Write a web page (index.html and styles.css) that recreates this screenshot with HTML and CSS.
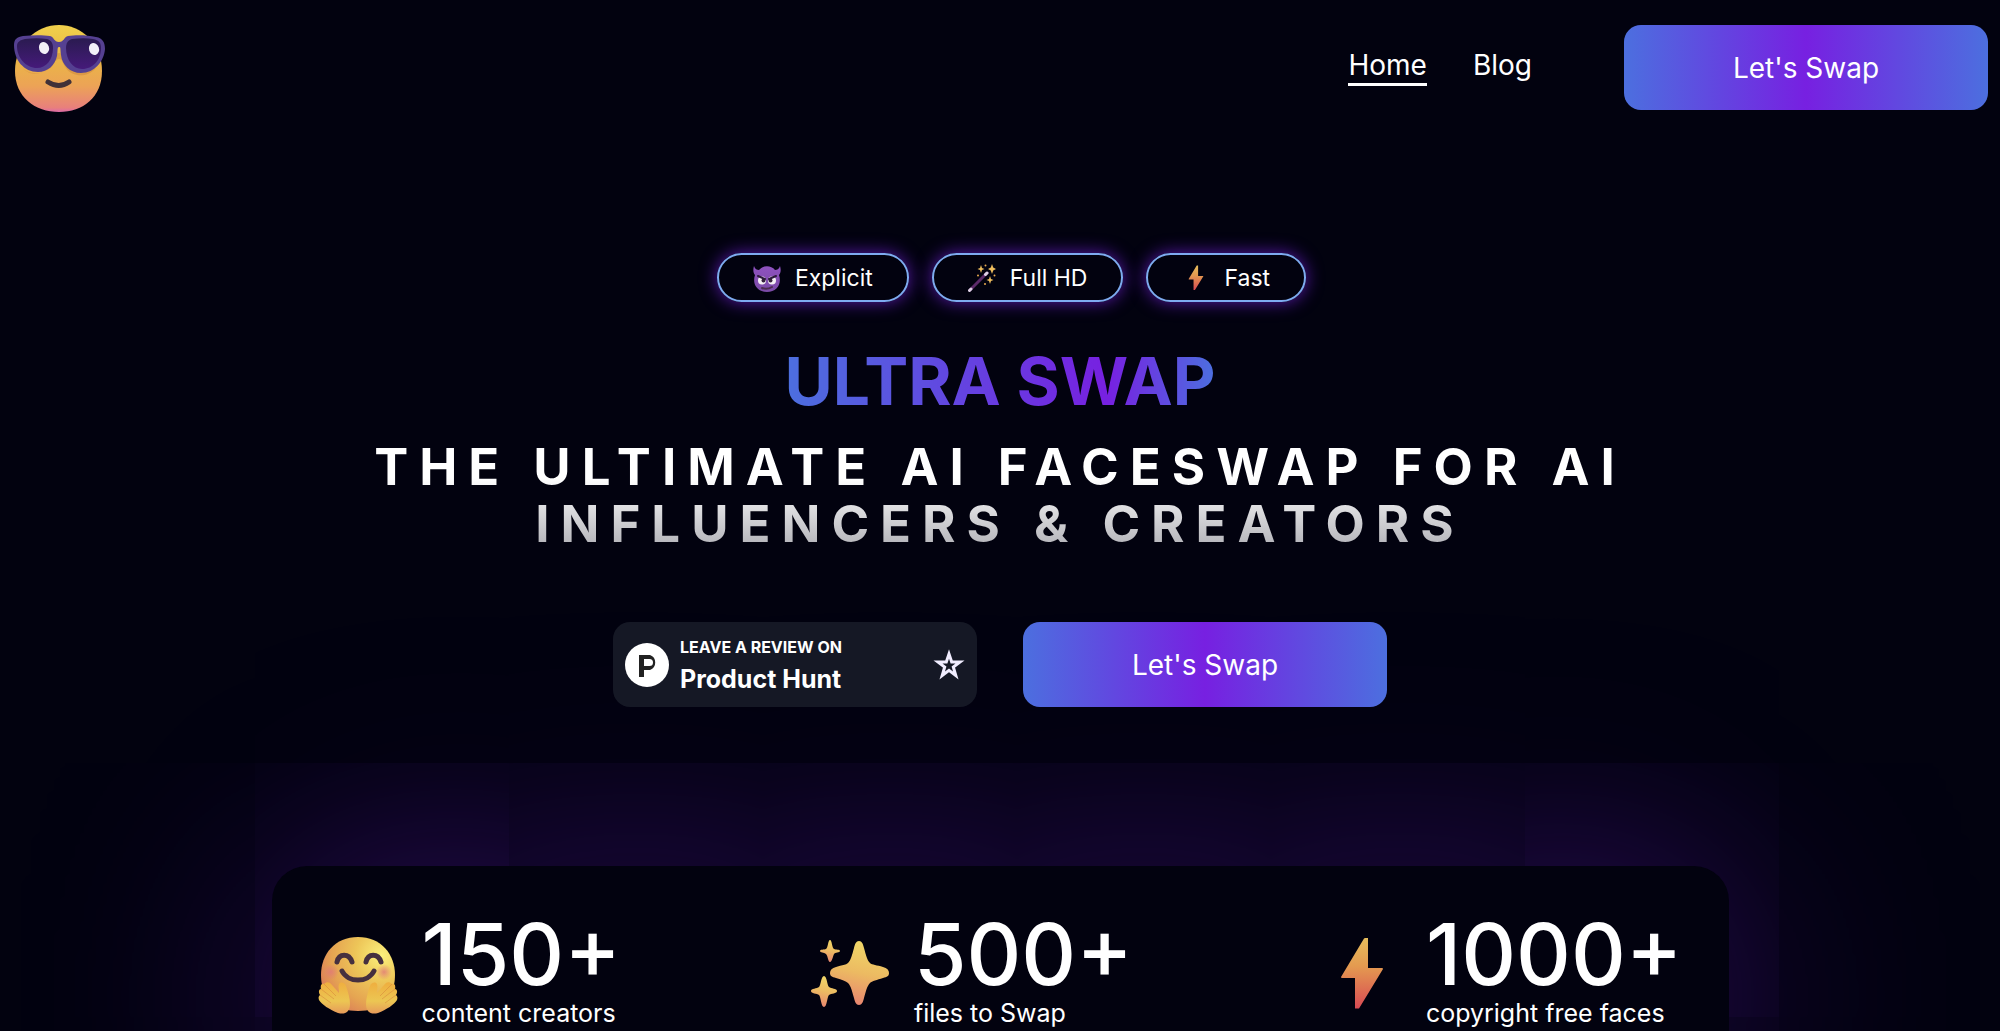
FILE: index.html
```html
<!DOCTYPE html>
<html lang="en">
<head>
<meta charset="utf-8">
<meta name="viewport" content="width=device-width, initial-scale=1">
<title>Ultra Swap</title>
<link rel="stylesheet" href="styles.css">
</head>
<body>
<svg class="defs" width="0" height="0" aria-hidden="true">
  <defs>
    <linearGradient id="face" x1="0" y1="0" x2="0" y2="1">
      <stop offset="0" stop-color="#f0d04c"/><stop offset=".35" stop-color="#eab944"/><stop offset=".7" stop-color="#eca356"/><stop offset=".95" stop-color="#e8807c"/><stop offset="1" stop-color="#dd6aa8"/>
    </linearGradient>
    <radialGradient id="hug" cx=".82" cy=".25" r=".9">
      <stop offset="0" stop-color="#fbf07c"/><stop offset=".4" stop-color="#edc558"/><stop offset=".75" stop-color="#e5a452"/><stop offset="1" stop-color="#dc7f58"/>
    </radialGradient>
    <radialGradient id="blush"><stop offset="0" stop-color="#e07878" stop-opacity=".8"/><stop offset="1" stop-color="#e07878" stop-opacity="0"/></radialGradient>
    <linearGradient id="hand" x1="0" y1="0" x2="0" y2="1"><stop offset="0" stop-color="#efae3f"/><stop offset=".6" stop-color="#ecc653"/><stop offset="1" stop-color="#e69a5a"/></linearGradient>
    <linearGradient id="lens" x1="0" y1="0" x2="0" y2="1"><stop offset="0" stop-color="#2a1b50"/><stop offset="1" stop-color="#451a7a"/></linearGradient>
    <linearGradient id="spark" x1=".6" y1="0" x2=".4" y2="1"><stop offset="0" stop-color="#f0d868"/><stop offset=".5" stop-color="#ecba62"/><stop offset="1" stop-color="#e88470"/></linearGradient>
    <linearGradient id="bolt" x1="0" y1="0" x2="0" y2="1"><stop offset="0" stop-color="#e6bd5c"/><stop offset=".4" stop-color="#e49a50"/><stop offset="1" stop-color="#d84a54"/></linearGradient>
    <linearGradient id="devil" x1="0" y1="0" x2="0" y2="1"><stop offset="0" stop-color="#8f52c0"/><stop offset="1" stop-color="#7a4aa6"/></linearGradient>
    <symbol id="i-bolt" viewBox="0 0 80 80"><path d="M43 4h3v30h14.500l.5 1-24 39.500h-4V44H19.500l-.5-1L42 4.500z" fill="url(#bolt)"/></symbol>
  </defs>
</svg>

<header class="header">
  <a class="logo" href="#" aria-label="Ultra Swap">
    <svg width="94" height="94" viewBox="0 0 94 94" aria-hidden="true">
      <path d="M47 4C69 4 90 22 90 50 90 76 71 91 47 91S3 76 3 50C3 22 25 4 47 4z" fill="url(#face)"/>
      <path d="M9 45c8 12 24 9 31-2 4-6 3-11 7-11s4 7 9 13c8 9 22 9 29-2l-2 5c-8 9-23 8-29-1-4-5-3-9-7-9s-5 7-10 10c-8 6-22 6-28-3z" fill="#c8803c" opacity=".45"/>
      <path d="M2 24c0-6 3-8 9-9 10-1 20-1 27 0 4 1 4 6 9 6s5-5 9-6c8-1 19-1 28 1 7 1 9 6 9 12-1 12-10 24-24 24-11 0-19-8-20-18-1-7 0-8-2-8s-1 3-2 9c-2 9-9 16-19 16C12 51 2 39 2 24z" fill="#554091"/>
      <path d="M5 25c0-4 3-6 8-7 8-1 15-1 22 0 4 1 6 4 6 9 0 12-7 20-16 20C14 47 5 37 5 25z" fill="url(#lens)"/>
      <path d="M54 27c0-5 2-8 6-9 8-1 15-1 21 0 6 1 8 4 8 9 0 12-8 21-19 21-9 0-16-9-16-21z" fill="url(#lens)"/>
      <ellipse cx="32" cy="27" rx="5" ry="6" fill="#f2f0f8" transform="rotate(-20 32 27)"/>
      <ellipse cx="82" cy="28" rx="5" ry="6" fill="#f2f0f8" transform="rotate(-20 82 28)"/>
      <path d="M36 61q11 7 21 0" fill="none" stroke="#413138" stroke-width="5" stroke-linecap="round"/>
    </svg>
  </a>
  <nav class="nav" aria-label="Main">
    <a class="nav-link nav-link-active" href="#" aria-current="page">Home</a>
    <a class="nav-link" href="#blog">Blog</a>
  </nav>
  <button class="button" type="button">Let's Swap</button>
</header>

<main>
  <section class="hero">
    <ul class="tags">
      <li class="tag">
        <svg class="tag-icon" viewBox="0 0 28 28" aria-hidden="true">
          <path d="M1 2c1 3 3 4 5 4 4-5 12-5 16 0 2 0 4-1 5-4 1 3 1 7-1 9 3 9-2 17-12 17S-1 20 2 11C0 9 0 5 1 2z" fill="url(#devil)"/>
          <circle cx="9" cy="16.500" r="4" fill="#f4f0f4"/><circle cx="19" cy="16.500" r="4" fill="#f4f0f4"/>
          <circle cx="10.500" cy="16.500" r="2" fill="#35203c"/><circle cx="17.500" cy="16.500" r="2" fill="#35203c"/>
          <path d="M5 12l7 3M23 12l-7 3" stroke="#2c1a3c" stroke-width="2" stroke-linecap="round"/>
          <path d="M9 24q5 2 10-1" fill="none" stroke="#4c2c50" stroke-width="2" stroke-linecap="round"/>
        </svg>
        Explicit
      </li>
      <li class="tag">
        <svg class="tag-icon" viewBox="0 0 28 28" aria-hidden="true">
          <path d="M2 26L19 9" stroke="#5b2a68" stroke-width="3" stroke-linecap="round"/>
          <path d="M1.500 26.500l1.500-1.500M17.500 10.500L19 9" stroke="#ddd0e4" stroke-width="3" stroke-linecap="round"/>
          <path d="M13 1l1 3 2.500 1-2.500 1-1 3-1-3-2.500-1L12 4zM24 0l1.200 3.500L28 5l-2.800 1.500L24 10l-1.200-3.500L20 5l2.800-1.500zM22 12l1 3 2.500 1-2.500 1-1 3-1-3-2.500-1 2.500-1z" fill="#eebd5e"/>
          <g fill="#e8a850"><circle cx="17.500" cy="1.500" r="1"/><circle cx="10" cy="11.500" r="1"/><circle cx="26.500" cy="11.500" r="1"/><circle cx="17" cy="20" r="1"/></g>
        </svg>
        Full HD
      </li>
      <li class="tag">
        <svg class="tag-icon" aria-hidden="true"><use href="#i-bolt"/></svg>
        Fast
      </li>
    </ul>

    <h1 class="title">ULTRA SWAP</h1>
    <h2 class="tagline">THE ULTIMATE AI FACESWAP FOR AI INFLUENCERS &amp; CREATORS</h2>

    <div class="actions">
      <a class="review" href="#review">
        <svg width="44" height="44" viewBox="0 0 44 44" aria-hidden="true">
          <circle cx="22" cy="22" r="22" fill="#fff"/>
          <path fill-rule="evenodd" d="M14 12h11a8 8 0 0 1 0 15h-6v7h-5zm5 4v7h5.500a3.500 3.500 0 0 0 0-7z" fill="#222"/>
        </svg>
        <span class="review-text">
          <span class="review-kicker">LEAVE A REVIEW ON</span>
          <span class="review-name">Product Hunt</span>
        </span>
        <svg class="review-star" width="32" height="32" viewBox="0 0 32 32" aria-hidden="true">
          <path d="M16 5l2.700 8h8.300l-6.700 5 2.500 8.500L16 21.300 9.200 26.500l2.500-8.500L5 13h8.300z" fill="none" stroke="#f1edff" stroke-width="3"/>
        </svg>
      </a>
      <button class="button" type="button">Let's Swap</button>
    </div>
  </section>

  <section class="stats" aria-label="Statistics">
    <div class="stat">
      <svg class="stat-icon" viewBox="0 0 80 80" aria-hidden="true">
        <path d="M40 3C63 3 77 20 77 41 77 64 62 77 40 77S3 64 3 41C3 20 17 3 40 3z" fill="url(#hug)"/>
        <circle cx="13" cy="38" r="8" fill="url(#blush)"/><circle cx="66" cy="38" r="8" fill="url(#blush)"/>
        <path d="M19 28c2-9 12-9 15 0M48 28c2-9 12-9 15 0" fill="none" stroke="#46303f" stroke-width="5" stroke-linecap="round"/>
        <path d="M24 37c6 12 26 12 32 0" fill="none" stroke="#46303f" stroke-width="5" stroke-linecap="round"/>
        <g id="hug-hand">
          <path d="M20 79C12 76 3 70 1 66c-1-3 0-4 1-5-2-3-1-6 1-6-1-4 1-6 3-5 3-3 6-2 8 1l7 8c0-4-1-6 0-9 2-3 6-1 7 2 2 6 4 12 4 18 0 8-5 11-12 9z" fill="url(#hand)"/>
          <path d="M2 61l11 8M3 55l13 10M6 50l12 12" fill="none" stroke="#d98c3c" stroke-width="1" opacity=".6"/>
        </g>
        <use href="#hug-hand" transform="matrix(-1 0 0 1 80 0)"/>
      </svg>
      <div class="stat-body"><p class="stat-value">150+</p><p class="stat-label">content creators</p></div>
    </div>
    <div class="stat">
      <svg class="stat-icon" viewBox="0 0 80 80" aria-hidden="true">
        <g fill="url(#spark)">
          <path d="M49 7c3 0 4 3 5 7 2 7 3 12 6 15 2 2 7 2 13 4 4 1 6 3 6 6s-2 4-6 5c-6 2-11 3-13 5-3 3-4 8-6 15-1 4-2 7-5 7s-4-3-5-7c-2-7-3-12-6-15-2-2-6-3-12-5-4-1-6-2-6-5s2-5 6-6c6-2 10-2 12-4 3-3 4-8 6-15 1-4 2-7 5-7z"/>
          <path d="M20 6c2 0 2 8 4 9s6 0 6 2-5 1-6 3-2 8-4 8-2-6-4-8-6-1-6-3 4-1 6-2 2-9 4-9z"/>
          <path d="M14 42c3 0 3 9 5 11s8 1 8 4-6 2-8 4-2 12-5 12-3-10-5-12-8-1-8-4 6-2 8-4 2-11 5-11z"/>
        </g>
      </svg>
      <div class="stat-body"><p class="stat-value">500+</p><p class="stat-label">files to Swap</p></div>
    </div>
    <div class="stat">
      <svg class="stat-icon" aria-hidden="true"><use href="#i-bolt"/></svg>
      <div class="stat-body"><p class="stat-value">1000+</p><p class="stat-label">copyright free faces</p></div>
    </div>
  </section>
</main>
</body>
</html>
```
FILE: styles.css
```css
:root {
  --bg: #02020f;
  --blue: #4c6fdf;
  --violet: #7720e1;
}

* {
  box-sizing: border-box;
}

html {
  background: var(--bg);
}

body {
  margin: 0;
  height: 100vh;
  overflow: hidden;
  background: var(--bg);
  color: #fff;
  font-family: Inter, "Liberation Sans", sans-serif;
}

h1, h2, p, ul {
  margin: 0;
  padding: 0;
}

.defs {
  position: absolute;
}

.header {
  display: flex;
  align-items: center;
  height: 135px;
  padding: 0 12px;
}

.logo {
  display: flex;
  margin-right: auto;
}

.nav {
  display: flex;
  gap: 46px;
  margin-right: 92px;
}

.nav-link {
  padding: 0 0 2px;
  border-bottom: 3px solid transparent;
  color: #fff;
  font-size: 28px;
  line-height: 32px;
  text-decoration: none;
}

.nav-link-active {
  border-bottom-color: #fff;
}

.button {
  width: 364px;
  height: 85px;
  border: 0;
  border-radius: 17px;
  background: linear-gradient(90deg, var(--blue), var(--violet) 50%, var(--blue));
  color: #fff;
  font: 400 28px/32px Inter, "Liberation Sans", sans-serif;
}

.hero {
  display: flex;
  flex-direction: column;
  align-items: center;
  padding: 118px 24px 0;
  text-align: center;
}

.tags {
  display: flex;
  list-style: none;
}

.tag {
  display: flex;
  align-items: center;
  gap: 14px;
  height: 49px;
  margin-left: 23px;
  padding: 0 34px;
  border: 2px solid #7eabf0;
  border-radius: 25px;
  box-shadow: 0 0 17px rgba(119, 32, 225, .75);
  font-size: 23px;
}

.tag-icon {
  width: 28px;
  height: 28px;
}

.title {
  margin-top: 42px;
  background: linear-gradient(90deg, var(--blue), var(--violet) 75%, var(--blue));
  -webkit-background-clip: text;
  background-clip: text;
  color: transparent;
  font-size: 66px;
  font-weight: 700;
  line-height: 74px;
}

.tagline {
  max-width: 1300px;
  margin-top: 20px;
  background: linear-gradient(180deg, #fff 35%, #aeaeb4);
  -webkit-background-clip: text;
  background-clip: text;
  color: transparent;
  font-size: 51px;
  font-weight: 700;
  letter-spacing: 11px;
  line-height: 57px;
}

.actions {
  display: flex;
  gap: 46px;
  margin-top: 70px;
}

.review {
  display: flex;
  align-items: center;
  gap: 11px;
  width: 364px;
  height: 85px;
  padding: 0 12px;
  border-radius: 17px;
  background: #151825;
  color: #fff;
  text-align: left;
  text-decoration: none;
}

.review-text {
  display: flex;
  flex-direction: column;
  flex: 1;
  gap: 4px;
  font-weight: 700;
}

.review-kicker {
  font-size: 16px;
  line-height: 24px;
}

.review-name {
  font-size: 25px;
  line-height: 32px;
}

.stats {
  display: flex;
  justify-content: space-between;
  width: calc(100% - 543px);
  min-height: 260px;
  margin: 159px auto 0;
  padding: 46px 46px;
  border-radius: 35px;
  background: var(--bg);
  box-shadow: 0 0 240px rgba(119, 32, 225, .4);
}

.stat {
  display: flex;
  align-items: flex-start;
  gap: 24px;
}

.stat-icon {
  width: 80px;
  height: 80px;
  margin-top: 22px;
}

.stat-value {
  font-size: 85px;
  font-weight: 500;
  line-height: 85px;
}

.stat-label {
  font-size: 25px;
  line-height: 32px;
}
```
